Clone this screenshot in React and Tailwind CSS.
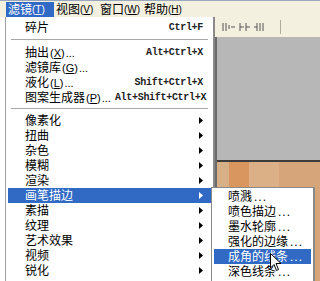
const cjk = { fontFamily: '"Liberation Sans", "Noto Sans CJK SC", sans-serif' };
const mono = { fontFamily: '"Liberation Mono", monospace' };

const MenuItem = ({ label, mn, dots, shortcut, arrow, active }) => (
  <div
    className={`flex h-[15px] items-center pl-[17px] pr-[8px] text-[12px] leading-none ${
      active ? "bg-[#316ac5] text-white" : "text-black"
    }`}
    style={cjk}
  >
    <span className="whitespace-nowrap">
      {label}
      {mn && (
        <span className="ml-[1px] text-[11px]">
          (<span className="underline">{mn}</span>)
        </span>
      )}
      {dots && <span className="ml-[1px] text-[11px]">...</span>}
    </span>
    <span className="min-w-[4px] flex-1" />
    {shortcut && (
      <span className="whitespace-nowrap text-[10px] font-bold tracking-[-0.3px] text-[#222]" style={mono}>
        {shortcut}
      </span>
    )}
    {arrow && (
      <svg width="4" height="7" viewBox="0 0 4 7">
        <path d="M0 0 L4 3.5 L0 7 Z" fill={active ? "#fff" : "#000"} />
      </svg>
    )}
  </div>
);

const Separator = ({ h }) => (
  <div className={`flex ${h} items-center px-[3px]`}>
    <div className="w-full border-t border-b border-t-[#a8a8a8] border-b-white" />
  </div>
);

const SubItem = ({ label, active }) => (
  <div
    className={`flex h-[15px] items-center whitespace-nowrap pl-[14px] text-[12px] leading-none ${
      active ? "bg-[#316ac5] text-white" : "text-black"
    }`}
    style={cjk}
  >
    {label}
    <span className="ml-[2px] tracking-[1px]">...</span>
  </div>
);

const TopItem = ({ label, mn, w, active }) => (
  <div
    className={`flex h-[15px] ${w} shrink-0 items-center whitespace-nowrap pl-[2px] text-[12px] leading-none ${
      active ? "bg-[#316ac5] text-white" : "text-black"
    }`}
    style={cjk}
  >
    <span>{label}</span>
    <span className="text-[10px]">
      (<span className="underline">{mn}</span>)
    </span>
  </div>
);

export default function App() {
  return (
    <div className="relative h-[281px] w-[320px] overflow-hidden bg-white">
      {/* menu bar */}
      <div className="flex h-[17px] items-end border-t border-[#9aa6bb] bg-[#f3f0e0] pl-[6px]">
        <TopItem label="滤镜" mn="T" w="w-[48px]" active />
        <TopItem label="视图" mn="V" w="w-[44px]" />
        <TopItem label="窗口" mn="W" w="w-[44px]" />
        <TopItem label="帮助" mn="H" w="w-[44px]" />
      </div>

      {/* app background */}
      <div className="flex h-[264px]">
        <div className="w-[214px] bg-white" />
        <div className="flex flex-1 flex-col">
          <div className="flex h-[20px] items-center gap-[5px] bg-[#f3f0e0] pl-[8px]">
            <svg width="52" height="12" viewBox="0 0 52 12">
              <g stroke="#555" strokeWidth="1" fill="none">
                <path d="M1 2v8M4 2v8M7 4v4" />
                <path d="M9 6h4" />
                <path d="M18 2v8M22 6h-4M24 2v8M28 6h-4" />
                <path d="M35 2v8M38 2v8M41 2v8M32 6h3" />
              </g>
            </svg>
            <div className="ml-[1px] h-[14px] w-[1px] bg-[#b0ad9e]" />
          </div>
          <div className="flex flex-1 flex-col border-l-[3px] border-[#6a6a6a]">
            <div className="h-[123px] bg-[#b7b7b7]" />
            <div className="h-[2px] bg-[#3c3c3c]" />
            <div className="flex flex-1 bg-[#d9b38c]">
              <div className="w-[12px] bg-[#d8b088]" />
              <div className="w-[20px] bg-[#d9975f]" />
              <div className="w-[30px] bg-[#dcb086]" />
              <div className="flex-1 bg-[#d6a57a]" />
            </div>
          </div>
        </div>
      </div>

      {/* filter menu */}
      <div className="absolute left-[5px] top-[17px] h-[270px] w-[210px] border-l border-r-2 border-l-[#a0a0a0] border-r-[#8a8a8a] bg-white pt-[3px] pl-[2px] pr-[2px]">
        <MenuItem label="碎片" shortcut="Ctrl+F" />
        <Separator h="h-[10px]" />
        <MenuItem label="抽出" mn="X" dots shortcut="Alt+Ctrl+X" />
        <MenuItem label="滤镜库" mn="G" dots />
        <MenuItem label="液化" mn="L" dots shortcut="Shift+Ctrl+X" />
        <MenuItem label="图案生成器" mn="P" dots shortcut="Alt+Shift+Ctrl+X" />
        <Separator h="h-[8px]" />
        <MenuItem label="像素化" arrow />
        <MenuItem label="扭曲" arrow />
        <MenuItem label="杂色" arrow />
        <MenuItem label="模糊" arrow />
        <MenuItem label="渲染" arrow />
        <MenuItem label="画笔描边" arrow active />
        <MenuItem label="素描" arrow />
        <MenuItem label="纹理" arrow />
        <MenuItem label="艺术效果" arrow />
        <MenuItem label="视频" arrow />
        <MenuItem label="锐化" arrow />
      </div>

      {/* submenu */}
      <div className="absolute left-[211px] top-[187px] h-[100px] w-[104px] border border-r-2 border-[#8a8a8a] bg-white px-[2px] pt-[1px]">
        <SubItem label="喷溅" />
        <SubItem label="喷色描边" />
        <SubItem label="墨水轮廓" />
        <SubItem label="强化的边缘" />
        <SubItem label="成角的线条" active />
        <SubItem label="深色线条" />
      </div>

      {/* cursor */}
      <svg className="absolute left-[270px] top-[253px]" width="12" height="19" viewBox="0 0 12 19">
        <path d="M0.5 0.5 L0.5 15 L4 11.5 L6.5 17.5 L8.5 16.5 L6 10.5 L11 10.5 Z" fill="#fff" stroke="#000" strokeWidth="1" />
      </svg>
    </div>
  );
}
